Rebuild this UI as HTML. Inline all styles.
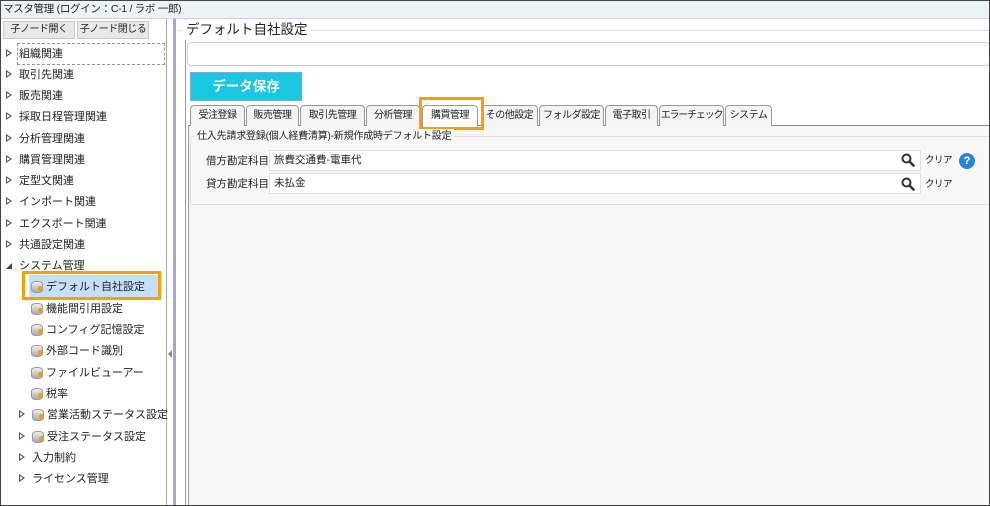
<!DOCTYPE html>
<html><head><meta charset="utf-8"><style>
*{margin:0;padding:0;box-sizing:border-box}
body{width:990px;height:506px;overflow:hidden;background:#fff;font-family:"Liberation Sans","Noto Sans CJK JP",sans-serif;font-size:11px;color:#222;position:relative}
.a{position:absolute;white-space:nowrap}
.frame{left:0;top:0;width:990px;height:506px;border:1px solid #444;z-index:9;pointer-events:none}
.tb{left:0;top:0;width:990px;height:19px;background:#eaf3f8;border-bottom:1px solid #c8d4da;font-size:10.5px;line-height:19px;padding-left:3px;letter-spacing:-0.3px}
.btn{top:21px;height:18px;background:#e8e8e8;border:1px solid #c8c8c8;text-align:center;line-height:16px;font-size:10px;letter-spacing:-0.5px}
.ti{left:6px;font-size:11px;height:20px;line-height:20px}
.arr{display:inline-block;width:0;height:0;border-left:6px solid #555;border-top:4px solid transparent;border-bottom:4px solid transparent;margin-right:7px;vertical-align:0px;position:relative}
.arr:after{content:"";position:absolute;left:-5px;top:-2px;border-left:3px solid #fff;border-top:2px solid transparent;border-bottom:2px solid transparent}
.ic{display:inline-block;width:13px;height:12px;margin-right:2px;vertical-align:-2px;position:relative}
.ic:before{content:"";position:absolute;left:0;top:1px;width:10px;height:10px;border-radius:5px/3px;background:linear-gradient(#eee,#aaa);border:1px solid #999}
.ic:after{content:"";position:absolute;left:7px;top:6px;width:5px;height:5px;border-radius:50%;background:#e8a020}
.tab{top:105px;height:21px;border:1px solid #999;border-bottom:none;border-radius:4px 4px 0 0;background:#f4f4f4;text-align:center;line-height:20px;font-size:10px;letter-spacing:-0.5px;overflow:hidden}
.inp{background:#fff;border:1px solid #e0e0e0}
</style></head><body>
<div class="a tb">マスタ管理 (ログイン：C-1 / ラボ 一郎)</div>
<div class="a btn" style="left:3px;width:72px">子ノード開く</div>
<div class="a btn" style="left:77px;width:72px">子ノード閉じる</div>
<div class="a" style="left:166px;top:19px;width:1px;height:487px;background:#aaa"></div>
<div class="a" style="left:173px;top:19px;width:3px;height:487px;background:#a8a8c0"></div>
<div class="a" style="left:168px;top:350px;width:0;height:0;border-right:4px solid #888;border-top:4px solid transparent;border-bottom:4px solid transparent"></div>
<div class="a" style="left:185px;top:19px;width:1px;height:487px;background:#999"></div>
<div class="a" style="left:17px;top:43px;width:148px;height:22px;border:1px dashed #999"></div>
<div class="a ti" style="top:44px"><span class="arr"></span>組織関連</div>
<div class="a ti" style="top:65px"><span class="arr"></span>取引先関連</div>
<div class="a ti" style="top:86px"><span class="arr"></span>販売関連</div>
<div class="a ti" style="top:107px"><span class="arr"></span>採取日程管理関連</div>
<div class="a ti" style="top:129px"><span class="arr"></span>分析管理関連</div>
<div class="a ti" style="top:150px"><span class="arr"></span>購買管理関連</div>
<div class="a ti" style="top:171px"><span class="arr"></span>定型文関連</div>
<div class="a ti" style="top:192px"><span class="arr"></span>インポート関連</div>
<div class="a ti" style="top:214px"><span class="arr"></span>エクスポート関連</div>
<div class="a ti" style="top:235px"><span class="arr"></span>共通設定関連</div>
<div class="a ti" style="top:256px"><span style="display:inline-block;width:0;height:0;border-right:6px solid #444;border-top:6px solid transparent;margin-right:7px"></span>システム管理</div>
<div class="a" style="left:29px;top:275px;width:130px;height:22px;background:#c4e0f8"></div>
<div class="a" style="left:22px;top:271px;width:139px;height:29px;border:3px solid #f5a300"></div>
<div class="a ti" style="left:31px;top:277px"><span class="ic"></span>デフォルト自社設定</div>
<div class="a ti" style="left:31px;top:299px"><span class="ic"></span>機能間引用設定</div>
<div class="a ti" style="left:31px;top:320px"><span class="ic"></span>コンフィグ記憶設定</div>
<div class="a ti" style="left:31px;top:341px"><span class="ic"></span>外部コード識別</div>
<div class="a ti" style="left:31px;top:363px"><span class="ic"></span>ファイルビューアー</div>
<div class="a ti" style="left:31px;top:384px"><span class="ic"></span>税率</div>
<div class="a ti" style="left:19px;top:405px"><span class="arr"></span><span class="ic"></span>営業活動ステータス設定</div>
<div class="a ti" style="left:19px;top:427px"><span class="arr"></span><span class="ic"></span>受注ステータス設定</div>
<div class="a ti" style="left:19px;top:448px"><span class="arr"></span>入力制約</div>
<div class="a ti" style="left:19px;top:469px"><span class="arr"></span>ライセンス管理</div>

<div class="a" style="left:178px;top:30px;width:812px;height:1px;background:#ddd"></div>
<div class="a" style="left:183px;top:20px;background:#fff;font-size:13.5px;line-height:20px;padding:0 3px">デフォルト自社設定</div>
<div class="a inp" style="left:187px;top:42px;width:803px;height:24px;border-radius:4px;border-color:#ccc"></div>
<div class="a" style="left:190px;top:72px;width:112px;height:29px;background:#19c8e0;border:1px solid #7ad;color:#fff;font-size:13.5px;font-weight:bold;text-align:center;line-height:27px">データ保存</div>
<div class="a" style="left:188px;top:125px;width:802px;height:381px;background:#f7f7f7;border-top:1px solid #888;border-left:1px solid #999"></div>
<div class="a tab" style="left:190px;width:55px">受注登録</div>
<div class="a tab" style="left:246px;width:53px">販売管理</div>
<div class="a tab" style="left:300px;width:65px">取引先管理</div>
<div class="a tab" style="left:366px;width:54px">分析管理</div>
<div class="a tab" style="left:422px;width:56px;background:#fff;height:22px">購買管理</div>
<div class="a tab" style="left:481px;width:57px">その他設定</div>
<div class="a tab" style="left:539px;width:65px">フォルダ設定</div>
<div class="a tab" style="left:605px;width:53px">電子取引</div>
<div class="a tab" style="left:659px;width:65px;letter-spacing:-1.2px">エラーチェック</div>
<div class="a tab" style="left:725px;width:47px">システム</div>
<div class="a" style="left:419px;top:97px;width:65px;height:33px;border:3px solid #f5a300"></div>
<div class="a" style="left:190px;top:136px;width:800px;height:69px;border:1px solid #ddd;border-right:none;border-radius:3px"></div>
<div class="a" style="left:194px;top:129px;background:#f7f7f7;padding:0 3px;line-height:15px;font-size:10px;letter-spacing:-0.2px">仕入先請求登録(個人経費清算)-新規作成時デフォルト設定</div>
<div class="a" style="left:206px;top:153px;line-height:16px;font-size:10.5px">借方勘定科目</div>
<div class="a" style="left:206px;top:176px;line-height:16px;font-size:10.5px">貸方勘定科目</div>
<div class="a inp" style="left:269px;top:150px;width:652px;height:21px;padding-left:4px;line-height:19px;font-size:10.5px">旅費交通費-電車代</div>
<div class="a inp" style="left:269px;top:173px;width:652px;height:21px;padding-left:4px;line-height:19px;font-size:10.5px">未払金</div>
<svg class="a" style="left:901px;top:153px" width="14" height="14" viewBox="0 0 14 14"><circle cx="5.5" cy="5.5" r="4" fill="none" stroke="#333" stroke-width="2"/><path d="M8.5 8.5L12.5 12.5" stroke="#333" stroke-width="2.6" stroke-linecap="round"/></svg>
<svg class="a" style="left:901px;top:177px" width="14" height="14" viewBox="0 0 14 14"><circle cx="5.5" cy="5.5" r="4" fill="none" stroke="#333" stroke-width="2"/><path d="M8.5 8.5L12.5 12.5" stroke="#333" stroke-width="2.6" stroke-linecap="round"/></svg>
<div class="a" style="left:925px;top:154px;font-size:9.5px;line-height:14px;letter-spacing:-0.5px">クリア</div>
<div class="a" style="left:925px;top:178px;font-size:9.5px;line-height:14px;letter-spacing:-0.5px">クリア</div>
<div class="a" style="left:959px;top:153px;width:16px;height:16px;border-radius:50%;background:#2a86d0;color:#fff;font-weight:bold;font-size:11px;text-align:center;line-height:16px">?</div>
<div class="a frame"></div>
</body></html>
